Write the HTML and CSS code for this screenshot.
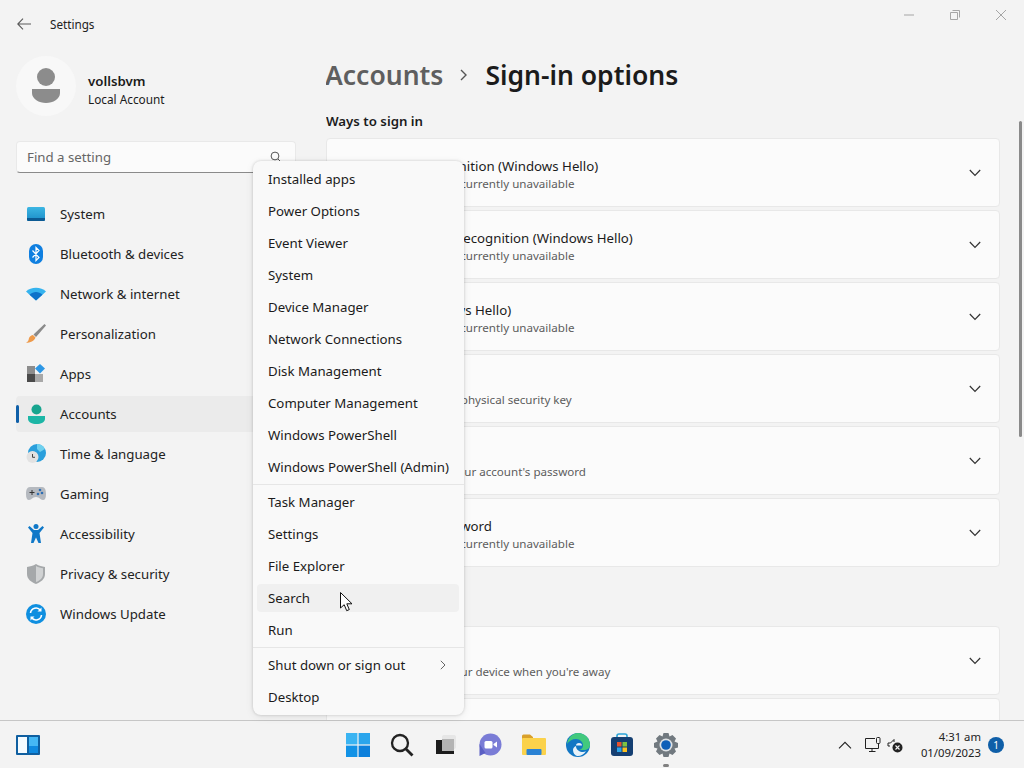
FILE: index.html
```html
<!DOCTYPE html>
<html lang="en">
<head>
<meta charset="utf-8">
<title>Settings</title>
<link rel="stylesheet" href="styles.css">
</head>
<body>
<div class="window">
  <header class="titlebar">
    <svg class="back" width="14" height="12" viewBox="0 0 14 12"><path d="M6 .7 .8 6 6 11.3M.8 6H14" fill="none" stroke="#5a5a5a" stroke-width="1.1"/></svg>
    <span class="apptitle">Settings</span>
    <div class="winctl">
      <svg width="12" height="12" viewBox="0 0 12 12"><path d="M1 6h10" stroke="#a5a5a5"/></svg>
      <svg width="12" height="12" viewBox="0 0 12 12"><path d="M1.500 3.500h7v7h-7zM3.500 1.500h7v7" fill="none" stroke="#a5a5a5"/></svg>
      <svg width="12" height="12" viewBox="0 0 12 12"><path d="M1 1l10 10M11 1 1 11" stroke="#a5a5a5"/></svg>
    </div>
  </header>
  <div class="content">
    <aside class="sidebar">
      <div class="profile">
        <div class="avatar">
          <svg width="30" height="36" viewBox="0 0 30 36"><circle cx="15" cy="9" r="9" fill="#8c8c8c"/><path d="M1 21h28v4c0 6-7 10-14 10S1 31 1 25z" fill="#8c8c8c"/></svg>
        </div>
        <div class="who"><div class="name">vollsbvm</div><div class="acct">Local Account</div></div>
      </div>
      <div class="search">
        <span>Find a setting</span>
        <svg width="12" height="12" viewBox="0 0 12 12"><circle cx="5" cy="5" r="3.900" fill="none" stroke="#555"/><path d="M8 8l3 3" stroke="#555"/></svg>
      </div>
      <nav class="nav">
        <a class="navitem"><svg class="ico" viewBox="0 0 20 20"><defs><linearGradient id="sysg" x1="0" y1="0" x2="0" y2="1"><stop offset="0" stop-color="#3cb6e3"/><stop offset="1" stop-color="#1b8dc8"/></linearGradient></defs><rect x="1" y="3" width="18" height="14" rx="1.500" fill="url(#sysg)"/><path d="M1 14h18v1.500a1.500 1.500 0 0 1-1.500 1.500h-15A1.500 1.500 0 0 1 1 15.500z" fill="#0c5a93"/></svg>System</a>
        <a class="navitem"><svg class="ico" viewBox="0 0 20 20"><rect x="3" y="0" width="14" height="20" rx="7" fill="#0f7fe0"/><path d="M6.500 6.500l6.500 7-3 3v-13l3 3-6.500 7" fill="none" stroke="#fff" stroke-width="1.200"/></svg>Bluetooth &amp; devices</a>
        <a class="navitem"><svg class="ico" viewBox="0 0 20 20"><path d="M0 7.500C5 2.500 15 2.500 20 7.500l-10 9z" fill="#35b3ee"/><path d="M3.500 10.700c4-3.500 9-3.500 13 0L10 16.500z" fill="#0d72c9"/></svg>Network &amp; internet</a>
        <a class="navitem"><svg class="ico" viewBox="0 0 20 20"><path d="M18.500 0 20 1.500 10 13 7.500 10.500z" fill="#8a8a8a"/><path d="M7 11l2.500 2.500C8.500 17 4 18.500 0 19c2.500-1.500 2.500-3 3-5 .5-1.500 2.500-3 4-3z" fill="#ee9a4a"/></svg>Personalization</a>
        <a class="navitem"><svg class="ico" viewBox="0 0 20 20"><rect x="1" y="2" width="8" height="8" fill="#8c8c8c"/><rect x="1" y="10" width="8" height="8" fill="#4a4a4a"/><rect x="9" y="10" width="8" height="8" fill="#a8a8a8"/><path d="M14 0l5 4.500-5 5-5-5z" fill="#2d97e5"/></svg>Apps</a>
        <a class="navitem current"><span class="marker"></span><svg class="ico" viewBox="0 0 20 20"><circle cx="10.500" cy="5.500" r="5" fill="#17a58f"/><path d="M2 12h17v3c0 3-4 5-8.500 5S2 18 2 15z" fill="#1cb6a6"/></svg>Accounts</a>
        <a class="navitem"><svg class="ico" viewBox="0 0 20 20"><circle cx="11" cy="9" r="9" fill="#2a9fdc"/><path d="M11 0a9 9 0 0 1 8 5l-5 3-3-3z" fill="#6fd0ee"/><circle cx="6.500" cy="13" r="6" fill="#e2e2e2"/><path d="M6.500 10v3.300h2.500" fill="none" stroke="#444"/></svg>Time &amp; language</a>
        <a class="navitem"><svg class="ico" viewBox="0 0 20 20"><path d="M4 3h12c3 0 4 3 4 7s-1 6-3 6c-3 0-3-3-7-3s-4 3-7 3c-2 0-3-2-3-6s1-7 4-7z" fill="#b5b9bf"/><path d="M3.500 8.500h5M6 6v5" stroke="#333"/><circle cx="14" cy="6" r="1.300" fill="#2f6fb4"/><circle cx="12" cy="10" r="1.300" fill="#2f6fb4"/><circle cx="16" cy="9" r="1.300" fill="#2f6fb4"/></svg>Gaming</a>
        <a class="navitem"><svg class="ico" viewBox="0 0 20 20"><circle cx="10" cy="2.500" r="2.500" fill="#0f78c8"/><path d="M2 3.500 3.500 2 8 6h4l4.500-4L18 3.500 13.500 9l1.500 10h-2.500L10 13.500 7.500 19H5L6.500 9z" fill="#0f78c8"/></svg>Accessibility</a>
        <a class="navitem"><svg class="ico" viewBox="0 0 20 20"><path d="M10 0c3 2 6 2.500 9 3v7c0 5-4 8-9 10-5-2-9-5-9-10V3c3-.5 6-1 9-3z" fill="#a5a8aa"/><path d="M10 2c2.500 1.500 5 2 7 2.300V10c0 4-3 6.500-7 8z" fill="#d0d2d3"/></svg>Privacy &amp; security</a>
        <a class="navitem"><svg class="ico" viewBox="0 0 20 20"><circle cx="10" cy="10" r="10" fill="#0f8fe0"/><path d="M4.500 9A5.500 5.500 0 0 1 14.500 6.500M15.500 11A5.500 5.500 0 0 1 5.500 13.500" fill="none" stroke="#fff" stroke-width="1.600"/><path d="M15.500 3.500v4h-4zM4.500 16.500v-4h4z" fill="#fff"/></svg>Windows Update</a>
      </nav>
    </aside>
    <main class="main">
      <h1 class="crumbs"><span class="parent">Accounts</span>
        <svg class="sep" width="10" height="12" viewBox="0 0 10 12"><path d="M2 1l5 5-5 5" fill="none" stroke="#555" stroke-width="1.400"/></svg>
        <span>Sign-in options</span></h1>
      <h2 class="section">Ways to sign in</h2>
      <div class="cards">
        <div class="card"><div class="ctext"><div class="ctitle">Facial recognition (Windows Hello)</div><div class="csub">This option is currently unavailable</div></div><svg class="chev" width="12" height="8" viewBox="0 0 12 8"><path d="M.8 1 6 6.500 11.200 1" fill="none" stroke="#333" stroke-width="1.200"/></svg></div>
        <div class="card"><div class="ctext"><div class="ctitle">Fingerprint recognition (Windows Hello)</div><div class="csub">This option is currently unavailable</div></div><svg class="chev" width="12" height="8" viewBox="0 0 12 8"><path d="M.8 1 6 6.500 11.200 1" fill="none" stroke="#333" stroke-width="1.200"/></svg></div>
        <div class="card"><div class="ctext"><div class="ctitle">PIN (Windows Hello)</div><div class="csub">This option is currently unavailable</div></div><svg class="chev" width="12" height="8" viewBox="0 0 12 8"><path d="M.8 1 6 6.500 11.200 1" fill="none" stroke="#333" stroke-width="1.200"/></svg></div>
        <div class="card"><div class="ctext"><div class="ctitle">Security key</div><div class="csub">Sign in with a physical security key</div></div><svg class="chev" width="12" height="8" viewBox="0 0 12 8"><path d="M.8 1 6 6.500 11.200 1" fill="none" stroke="#333" stroke-width="1.200"/></svg></div>
        <div class="card"><div class="ctext"><div class="ctitle">Password</div><div class="csub">Sign in with your account's password</div></div><svg class="chev" width="12" height="8" viewBox="0 0 12 8"><path d="M.8 1 6 6.500 11.200 1" fill="none" stroke="#333" stroke-width="1.200"/></svg></div>
        <div class="card"><div class="ctext"><div class="ctitle">Picture password</div><div class="csub">This option is currently unavailable</div></div><svg class="chev" width="12" height="8" viewBox="0 0 12 8"><path d="M.8 1 6 6.500 11.200 1" fill="none" stroke="#333" stroke-width="1.200"/></svg></div>
      </div>
      <h2 class="section second">Additional settings</h2>
      <div class="cards">
        <div class="card plain"><div class="ctext"><div class="ctitle">Dynamic lock</div><div class="csub">Windows can lock your device when you're away</div></div><svg class="chev" width="12" height="8" viewBox="0 0 12 8"><path d="M.8 1 6 6.500 11.200 1" fill="none" stroke="#333" stroke-width="1.200"/></svg></div>
        <div class="card plain"></div>
      </div>
    </main>
    <div class="scrollthumb"></div>
  </div>
</div>
<footer class="taskbar">
  <div class="tb-left">
    <svg width="26" height="22" viewBox="0 0 26 22"><rect x="1" y="1" width="24" height="20" rx="1" fill="#0f5fa0"/><rect x="3" y="3" width="9" height="16" fill="#f4fbff"/><rect x="14" y="3" width="9" height="16" fill="#45b8f5"/><rect x="14" y="12" width="9" height="7" fill="#0f8ae0"/></svg>
  </div>
  <div class="tb-center">
    <span class="tbi"><svg width="24" height="24" viewBox="0 0 24 24"><rect x="0" y="0" width="11.400" height="11.400" fill="#3ab4f2"/><rect x="12.600" y="0" width="11.400" height="11.400" fill="#2aa5ec"/><rect x="0" y="12.600" width="11.400" height="11.400" fill="#1292e6"/><rect x="12.600" y="12.600" width="11.400" height="11.400" fill="#0d80db"/></svg></span>
    <span class="tbi"><svg width="24" height="24" viewBox="0 0 24 24"><circle cx="10" cy="10" r="8" fill="none" stroke="#222" stroke-width="2.300"/><path d="M15.500 15.500 22.500 22.500" stroke="#222" stroke-width="2.800"/></svg></span>
    <span class="tbi"><svg width="24" height="24" viewBox="0 0 24 24"><rect x="8" y="2" width="14" height="14" rx="2" fill="#e6e6e6"/><rect x="8" y="6" width="12" height="12" fill="#b4b4b4"/><path d="M2 7h6v11h12v3H2z" fill="#1c1c1c"/></svg></span>
    <span class="tbi"><svg width="24" height="24" viewBox="0 0 24 24"><circle cx="12.500" cy="11.500" r="11" fill="#7a7cd6"/><path d="M1.500 11v12l6-3z" fill="#5b5fc4"/><rect x="6.500" y="8" width="8" height="7.500" rx="1.500" fill="#fff"/><path d="M15.500 11l3.500-2.500v6L15.500 12z" fill="#fff"/></svg></span>
    <span class="tbi"><svg width="24" height="24" viewBox="0 0 24 24"><path d="M0 3a1.500 1.500 0 0 1 1.500-1.500H8L11 4v3H0z" fill="#d9a02b"/><rect x="0" y="5" width="24" height="17" rx="1" fill="#fbd24b"/><rect x="4.500" y="16" width="15" height="6" rx="1" fill="#2a82d4"/></svg></span>
    <span class="tbi"><svg width="24" height="24" viewBox="0 0 24 24"><circle cx="12" cy="12" r="12" fill="#1277c4"/><path d="M12 0a12 12 0 0 1 12 12c0 3-3 5-6 5H12c2 0 5-1 5-5 0-3-3-6-7-6-4 0-7 2-9 5C2 5 6 0 12 0z" fill="#42c97d"/><path d="M10 12.500c0-1.500 1-2.500 3-2.500s3 1 3 2.500H10zM10 13c0 4 4 6 7 6 1 0 2-.3 3-.8-2 3.300-6 5.300-9 4.800-2-.5-4-3-4-6 0-2 1-3 3-4z" fill="#fff" opacity=".9"/></svg></span>
    <span class="tbi"><svg width="24" height="24" viewBox="0 0 24 24"><path d="M7 5V3a2 2 0 0 1 2-2h6a2 2 0 0 1 2 2v2" fill="none" stroke="#2ba4d8" stroke-width="1.600"/><rect x="1" y="4" width="22" height="19" rx="3" fill="#153f72"/><rect x="7" y="9" width="4.500" height="4.500" fill="#e8522d"/><rect x="12.500" y="9" width="4.500" height="4.500" fill="#7dc242"/><rect x="7" y="14.500" width="4.500" height="4.500" fill="#2ba4ea"/><rect x="12.500" y="14.500" width="4.500" height="4.500" fill="#fcc020"/></svg></span>
    <span class="tbi active"><svg width="26" height="26" viewBox="0 0 26 26"><path d="M10.500 1h5l1 3.500 3-1.500 3.500 3.500-1.500 3L25 11v4.500l-3.500 1 1.500 3L19.500 23l-3-1.500-1 3.500h-5l-1-3.500-3 1.500L3 19.500l1.500-3L1 15.500V11l3.500-1.500L3 6.500 6.500 3l3 1.500z" fill="#71797f"/><circle cx="13" cy="13" r="6.500" fill="#dfe3e6"/><circle cx="13" cy="13" r="4.800" fill="#0f60b8"/></svg><i class="dot"></i></span>
  </div>
  <div class="tb-right">
    <svg class="tray chevup" width="14" height="8" viewBox="0 0 14 8"><path d="M1 7.300 7 1.300 13 7.300" fill="none" stroke="#222" stroke-width="1.100"/></svg>
    <svg class="tray monitor" width="16" height="16" viewBox="0 0 16 16"><path d="M10 1.500H.5v10h13V7M4 14.500h6.500M7 11.500v3" fill="none" stroke="#222"/><rect x="11.500" y=".5" width="3.500" height="6" rx="1" fill="#f3f3f3" stroke="#222"/></svg>
    <svg class="tray" width="16" height="16" viewBox="0 0 16 16"><path d="M1 6h2.500L7 2.500V5M1 6v3h2" fill="none" stroke="#222"/><circle cx="10.500" cy="10.500" r="5" fill="#222"/><path d="M8.500 8.500l4 4M12.500 8.500l-4 4" stroke="#f3f3f3" stroke-width="1.100"/></svg>
    <div class="clock"><div>4:31 am</div><div>01/09/2023</div></div>
    <span class="badge">1</span>
  </div>
</footer>
<div class="menu">
  <div class="mgroup">
    <div class="mitem">Installed apps</div>
    <div class="mitem">Power Options</div>
    <div class="mitem">Event Viewer</div>
    <div class="mitem">System</div>
    <div class="mitem">Device Manager</div>
    <div class="mitem">Network Connections</div>
    <div class="mitem">Disk Management</div>
    <div class="mitem">Computer Management</div>
    <div class="mitem">Windows PowerShell</div>
    <div class="mitem">Windows PowerShell (Admin)</div>
  </div>
  <div class="mgroup">
    <div class="mitem">Task Manager</div>
    <div class="mitem">Settings</div>
    <div class="mitem">File Explorer</div>
    <div class="mitem hover">Search</div>
    <div class="mitem">Run</div>
  </div>
  <div class="mgroup">
    <div class="mitem">Shut down or sign out<svg class="mchev" width="6" height="10" viewBox="0 0 6 10"><path d="M.8.8 5 5 .8 9.200" fill="none" stroke="#666"/></svg></div>
    <div class="mitem">Desktop</div>
  </div>
</div>
<svg class="cursor" width="13" height="20" viewBox="0 0 13 20"><path d="M.5.500v15.500l3.700-3.300 2.500 6 2.600-1.100-2.500-5.800H12z" fill="#fff" stroke="#111"/></svg>
</body>
</html>
```
FILE: styles.css
```css
* { box-sizing: border-box; }
html, body { margin: 0; height: 100%; overflow: hidden; }
body {
  display: flex;
  flex-direction: column;
  height: 768px;
  background: #f3f3f3;
  color: #1b1b1b;
  font-family: "Noto Sans", "Open Sans", "Liberation Sans", sans-serif;
  font-size: 13.25px;
}
.window { height: 720px; display: flex; flex-direction: column; overflow: hidden; position: relative; }
.titlebar { height: 48px; flex: none; display: flex; align-items: center; padding-left: 17px; }
.back { flex: none; }
.apptitle { margin-left: 19px; font-size: 11.7px; color: #222; }
.winctl { margin-left: auto; display: flex; gap: 34px; padding-right: 17px; margin-top: -18px; }
.content { flex: 1; min-height: 0; display: flex; }
.sidebar { width: 326px; flex: none; padding: 8px 30px 0 16px; }
.profile { display: flex; align-items: center; height: 60px; }
.avatar { width: 60px; height: 60px; border-radius: 50%; background: #f8f8f8; display: flex; align-items: center; justify-content: center; flex: none; }
.who { margin-left: 12px; line-height: 18px; margin-top: 7px; }
.name { font-weight: 600; font-size: 13.25px; }
.acct { font-size: 11.8px; }
.search {
  margin-top: 25px; height: 32px; background: #fbfbfb; border: 1px solid #e9e9e9;
  border-bottom: 1px solid #8a8a8a; border-radius: 4px; display: flex; align-items: center;
  justify-content: space-between; padding: 0 13px 0 10px; color: #666;
}
.nav { margin-top: 23px; display: flex; flex-direction: column; gap: 4px; }
.navitem { height: 36px; display: flex; align-items: center; padding-left: 10px; border-radius: 4px; position: relative; color: #222; }
.ico { width: 20px; height: 20px; margin-right: 14px; flex: none; }
.current { background: #ebebeb; }
.marker { position: absolute; left: 0; top: 9px; width: 3px; height: 18px; border-radius: 2px; background: #0f5fa8; }
.main { flex: 1; min-width: 0; padding-right: 24px; overflow: hidden; }
.crumbs { margin: 6px 0 0 -1px; height: 42px; display: flex; align-items: center; font-size: 26.5px; font-weight: 600; line-height: 42px; color: #1b1b1b; }
.parent { color: #5f5f5f; }
.sep { margin: 0 16px; }
.section { margin: 15px 0 0; font-size: 13.25px; font-weight: 600; line-height: 20px; }
.second { margin-top: 24px; height: 35px; }
.cards { display: flex; flex-direction: column; gap: 3px; margin-top: 7px; }
.second + .cards { margin-top: 0; }
.card { height: 69px; flex: none; background: #fbfbfb; border: 1px solid #e8e8e8; border-radius: 4px; display: flex; align-items: center; justify-content: space-between; padding: 0 18px 0 58px; }
.plain { padding-left: 21px; }
.ctext { line-height: 18px; margin-top: 4px; }
.ctitle { font-size: 13.25px; color: #1b1b1b; }
.csub { font-size: 11.6px; color: #5d5d5d; }
.chev { flex: none; }
.scrollthumb { position: absolute; left: 1019px; top: 121px; width: 3px; height: 316px; border-radius: 2px; background: #8a8a8a; }
.taskbar { height: 48px; flex: none; display: grid; grid-template-columns: 1fr auto 1fr; align-items: center; border-top: 1px solid #c6c6c6; background: #f3f3f3; }
.tb-left { padding-left: 15px; display: flex; align-items: center; }
.tb-center { display: flex; }
.tbi { width: 44px; height: 44px; display: flex; align-items: center; justify-content: center; position: relative; }
.dot { position: absolute; left: 19px; bottom: 0; width: 6px; height: 3px; border-radius: 2px; background: #808080; }
.tb-right { display: flex; align-items: center; justify-content: flex-end; padding-right: 20px; }
.tray { flex: none; margin-right: 10px; }
.monitor { margin-right: 6px; }
.chevup { margin-right: 13px; }
.clock { text-align: right; font-size: 11.3px; line-height: 16px; color: #222; margin-left: 8px; }
.badge { width: 16px; height: 16px; border-radius: 50%; background: #0f5fa8; color: #fff; font-size: 10px; line-height: 16px; text-align: center; margin-left: 7px; }
.menu { position: absolute; left: 253px; top: 161px; width: 211px; height: 554px; background: #f9f9f9; border-radius: 8px; padding-top: 2px; box-shadow: 0 0 3px rgba(0,0,0,.18), 0 2px 8px rgba(0,0,0,.08); }
.mgroup + .mgroup { border-top: 1px solid #e6e6e6; margin-top: 1px; padding-top: 1px; }
.mitem { height: 32px; display: flex; align-items: center; padding-left: 15px; position: relative; isolation: isolate; color: #1b1b1b; font-size: 13.25px; }
.hover::before { content: ""; position: absolute; left: 4px; right: 5px; top: 2px; bottom: 2px; background: #f0f0f0; border-radius: 4px; z-index: -1; }
.mchev { position: absolute; right: 18px; top: 11px; }
.cursor { position: absolute; left: 340px; top: 592px; }
```
